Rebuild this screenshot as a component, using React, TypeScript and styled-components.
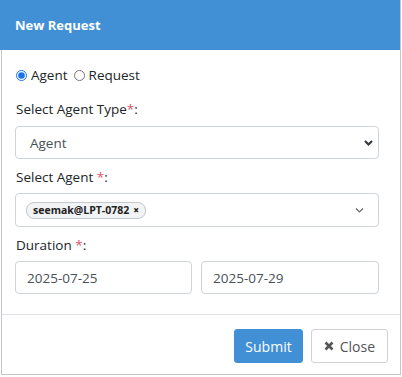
import React, { useState } from 'react'
import styled, { createGlobalStyle } from 'styled-components'

const GlobalStyle = createGlobalStyle`
  body {
    margin: 0;
    font-family: 'Segoe UI', 'Open Sans', 'Noto Sans', sans-serif;
    color: #212529;
    background: #fff;
  }
`

const Modal = styled.div`
  width: 401px;
  height: 375px;
  box-sizing: border-box;
  display: flex;
  flex-direction: column;
`

const Header = styled.div`
  height: 50px;
  background: #4190d5;
  display: flex;
  align-items: center;
  padding: 0 15px;
  color: #fff;
  font-weight: 700;
  font-size: 13px;
  border-right: 1px solid #c6c6c6;
`

const Frame = styled.div`
  flex: 1;
  margin-left: 1px;
  border-left: 1px solid #c6c6c6;
  border-right: 1px solid #c6c6c6;
  border-bottom: 1px solid #c6c6c6;
  display: flex;
  flex-direction: column;
`

const Body = styled.div`
  box-sizing: border-box;
  padding: 14px 21px 0 13px;
  height: 265px;
  border-bottom: 1px solid #dee2e6;
  font-size: 13.5px;
`

const RadioRow = styled.div`
  display: flex;
  align-items: center;
  height: 22px;
  margin-bottom: 13px;
`

const RadioLabel = styled.label`
  display: inline-flex;
  align-items: center;
  margin-right: 5px;
  input {
    width: 11px;
    height: 11px;
    margin: 0 4px 0 1px;
    accent-color: #1a73e8;
  }
`

const Label = styled.div<{ $mb: number }>`
  height: 20px;
  line-height: 20px;
  margin-bottom: ${p => p.$mb}px;
  margin-left: 1px;
  span {
    color: #e0526b;
  }
`

const Control = styled.div<{ $mb?: number; $h?: number; $pl?: number; $pr?: number }>`
  height: ${p => p.$h ?? 33}px;
  box-sizing: border-box;
  border: 1px solid #ced4da;
  border-radius: 4px;
  display: flex;
  align-items: center;
  padding: 0 ${p => p.$pr ?? 12}px 0 ${p => p.$pl ?? 11}px;
  margin-bottom: ${p => p.$mb ?? 0}px;
  color: #495057;
  background: #fff;
`

const Grow = styled.div`
  flex: 1;
  display: flex;
  align-items: center;
`

const Chip = styled.span`
  display: inline-flex;
  align-items: center;
  height: 15px;
  padding: 0 6px 0 6px;
  border: 1px solid #c4c8cc;
  border-radius: 8px;
  background: #f1f3f4;
  font-size: 10.5px;
  font-weight: 700;
  color: #222;
  b {
    margin-left: 4px;
    font-size: 10px;
  }
`

const DateRow = styled.div`
  display: grid;
  grid-template-columns: 177px 178px;
  gap: 9px;
`

const Footer = styled.div`
  display: flex;
  justify-content: flex-end;
  gap: 8px;
  padding: 14px 12px 0 0;
`

const Btn = styled.button<{ $primary?: boolean }>`
  height: 34px;
  box-sizing: border-box;
  border-radius: 3px;
  font-family: inherit;
  font-size: 14px;
  display: inline-flex;
  align-items: center;
  gap: 6px;
  padding: 0 ${p => (p.$primary ? 10 : 12)}px;
  border: 1px solid ${p => (p.$primary ? '#4190d5' : '#cfd3d7')};
  background: ${p => (p.$primary ? '#4190d5' : '#fff')};
  color: ${p => (p.$primary ? '#fff' : '#555')};
`

const Chevron = ({ bold }: { bold?: boolean }) => (
  <svg width="11" height="8" viewBox="0 0 11 8">
    <path
      d={bold ? 'M2 2 L5.5 5.5 L9 2' : 'M2 2.5 L5.5 6 L9 2.5'}
      fill="none"
      stroke={bold ? '#343a40' : '#666'}
      strokeWidth={bold ? 2.2 : 1.2}
    />
  </svg>
)

const CloseIcon = () => (
  <svg width="10" height="10" viewBox="0 0 10 10">
    <path d="M1.5 1.5 L8.5 8.5 M8.5 1.5 L1.5 8.5" stroke="#555" strokeWidth="2.6" />
  </svg>
)

export default function App() {
  const [mode, setMode] = useState('agent')
  return (
    <>
      <GlobalStyle />
      <Modal>
        <Header>New Request</Header>
        <Frame>
          <Body>
            <RadioRow>
              <RadioLabel>
                <input type="radio" checked={mode === 'agent'} onChange={() => setMode('agent')} />
                Agent
              </RadioLabel>
              <RadioLabel>
                <input type="radio" checked={mode === 'request'} onChange={() => setMode('request')} />
                Request
              </RadioLabel>
            </RadioRow>
            <Label $mb={7}>
              Select Agent Type<span>*</span>:
            </Label>
            <Control $mb={8} $pl={14} $pr={4}>
              <Grow>Agent</Grow>
              <Chevron bold />
            </Control>
            <Label $mb={6}>
              Select Agent <span>*</span>:
            </Label>
            <Control $mb={8} $h={34} $pl={10} $pr={13}>
              <Grow>
                <Chip>
                  seemak@LPT-0782<b>×</b>
                </Chip>
              </Grow>
              <Chevron />
            </Control>
            <Label $mb={6}>
              Duration <span>*</span>:
            </Label>
            <DateRow>
              <Control>2025-07-25</Control>
              <Control>2025-07-29</Control>
            </DateRow>
          </Body>
          <Footer>
            <Btn $primary>Submit</Btn>
            <Btn>
              <CloseIcon />
              Close
            </Btn>
          </Footer>
        </Frame>
      </Modal>
    </>
  )
}
